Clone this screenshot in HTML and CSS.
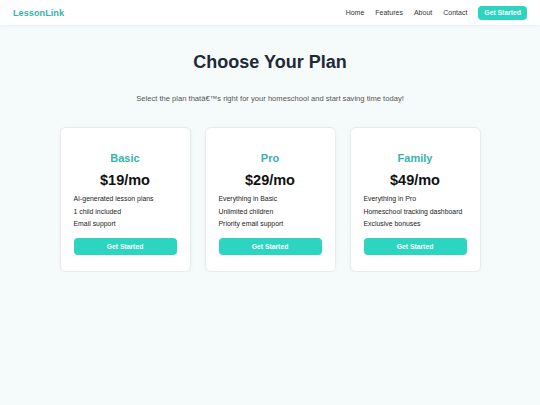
FILE: index.html
```html
<!DOCTYPE html>
<html lang="en">
<head>
  <meta charset="UTF-8">
  <title>LessonLink | Pricing</title>
  <link rel="stylesheet" href="styles.css">
</head>
<body>

  <!-- Header -->
  <header class="site-header">
    <div class="logo">LessonLink</div>
    <nav class="nav">
      <a href="#">Home</a>
      <a href="#">Features</a>
      <a href="#">About</a>
      <a href="#">Contact</a>
      <a href="#" class="btn btn-small">Get Started</a>
    </nav>
  </header>

  <!-- Pricing -->
  <section class="pricing">
    <h1>Choose Your Plan</h1>
    <p class="subtitle">Select the plan thatâ€™s right for your homeschool and start saving time today!</p>

    <div class="plans">
      <div class="plan">
        <h3>Basic</h3>
        <div class="price">$19/mo</div>
        <ul>
          <li>AI-generated lesson plans</li>
          <li>1 child included</li>
          <li>Email support</li>
        </ul>
        <a href="#" class="btn">Get Started</a>
      </div>

      <div class="plan">
        <h3>Pro</h3>
        <div class="price">$29/mo</div>
        <ul>
          <li>Everything in Basic</li>
          <li>Unlimited children</li>
          <li>Priority email support</li>
        </ul>
        <a href="#" class="btn">Get Started</a>
      </div>

      <div class="plan">
        <h3>Family</h3>
        <div class="price">$49/mo</div>
        <ul>
          <li>Everything in Pro</li>
          <li>Homeschool tracking dashboard</li>
          <li>Exclusive bonuses</li>
        </ul>
        <a href="#" class="btn">Get Started</a>
      </div>
    </div>
  </section>

</body>
</html>
```

FILE: styles.css
```css
body {
  margin: 0;
  font-family: "Liberation Sans", Arial, sans-serif;
  background: #f5fbfa;
  color: #222;
}

.site-header {
  display: flex;
  justify-content: space-between;
  align-items: center;
  height: 25px;
  padding: 0 13px;
  background: #fff;
  box-shadow: 0 1px 3px rgba(0, 0, 0, 0.05);
}

.logo {
  font-size: 9.2px;
  font-weight: bold;
  color: #38b2ac;
}

.nav {
  display: flex;
  align-items: center;
  gap: 11px;
}

.nav a {
  font-size: 7px;
  color: #333;
  text-decoration: none;
}

.btn {
  display: block;
  background: #2dd4bf;
  color: #fff;
  text-align: center;
  text-decoration: none;
  font-weight: bold;
  font-size: 6.8px;
  line-height: 17px;
  border-radius: 4px;
}

.nav a.btn {
  color: #fff;
  font-size: 6.8px;
  line-height: 14px;
  padding: 0 6px;
  margin-top: 1px;
}

.pricing {
  text-align: center;
  padding-top: 26px;
}

.pricing h1 {
  margin: 0;
  font-size: 18px;
  line-height: 22px;
  color: #1f2937;
}

.subtitle {
  margin: 21px 0 0;
  font-size: 7.6px;
  line-height: 10px;
  color: #555;
}

.plans {
  display: flex;
  justify-content: center;
  gap: 14px;
  margin-top: 23px;
}

.plan {
  width: 103px;
  padding: 23px 13px 16px;
  background: #fff;
  border: 1px solid #e6ecec;
  border-radius: 6px;
  box-shadow: 0 1px 4px rgba(0, 0, 0, 0.04);
  text-align: left;
}

.plan h3 {
  margin: 0;
  text-align: center;
  font-size: 11px;
  line-height: 14px;
  color: #38b2ac;
}

.price {
  margin-top: 6px;
  text-align: center;
  font-size: 14.5px;
  line-height: 18px;
  font-weight: bold;
  color: #111;
}

.plan ul {
  list-style: none;
  margin: 4px 0 7px;
  padding: 0;
}

.plan li {
  font-size: 6.9px;
  line-height: 12.5px;
  color: #222;
}
```
